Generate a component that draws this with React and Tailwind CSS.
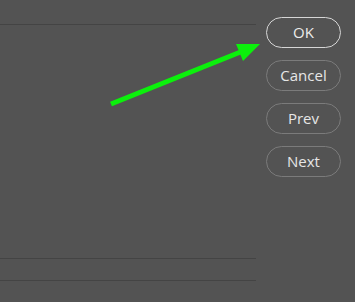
import React from 'react'

const Btn = ({ label, primary }) => (
    <button
        className={
            primary
                ? "h-[31px] w-[75px] rounded-full border border-[#d6d6d6] text-[15px] text-[#ececec]"
                : "h-[31px] w-[75px] rounded-full border border-[#7b7b7b] text-[15px] text-[#e6e6e6]"
        }
    >
        {label}
    </button>
)

const App = () => {
    return (
        <div className="relative w-[355px] h-[302px] bg-[#535353] flex font-['Open_Sans',sans-serif] overflow-hidden">

            {/* left panel */}
            <div className="w-[256px] h-full flex flex-col">
                <div className="h-[25px] border-b border-[#444444]"></div>
                <div className="h-[234px] border-b border-[#444444]"></div>
                <div className="h-[22px] border-b border-[#444444]"></div>
            </div>

            {/* buttons */}
            <div className="pl-[10px] pt-[17px] flex flex-col gap-3">
                <Btn label="OK" primary />
                <Btn label="Cancel" />
                <Btn label="Prev" />
                <Btn label="Next" />
            </div>

            {/* annotation arrow */}
            <svg className="absolute left-0 top-0" width="355" height="302">
                <line x1="111" y1="104" x2="243" y2="51" stroke="#0cf00c" strokeWidth="5" />
                <polygon points="260,44 236,44 243,61" fill="#0cf00c" />
            </svg>
        </div>
    )
}

export default App
